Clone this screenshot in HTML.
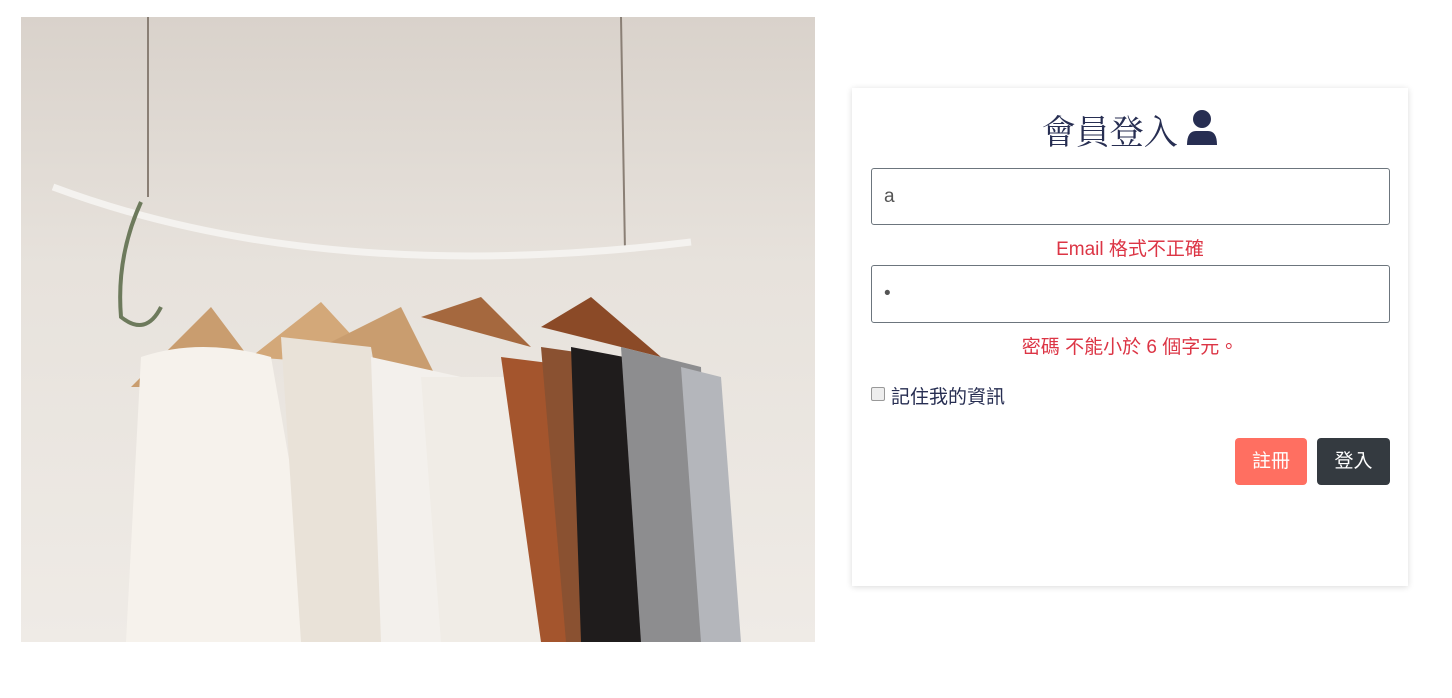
<!DOCTYPE html>
<html><head><meta charset="utf-8"><style>
body{margin:0;background:#fff;width:1452px;height:698px;overflow:hidden;font-family:"Liberation Sans","Noto Sans CJK TC",sans-serif;}
.img{position:absolute;left:21px;top:17px;width:794px;height:625px;background:linear-gradient(180deg,#d9d2cb 0%,#e7e2dc 40%,#efebe6 100%);overflow:hidden}
.card{position:absolute;left:852px;top:88px;width:556px;height:498px;background:#fff;box-shadow:0 1px 6px rgba(0,0,0,.15);}
h1{position:absolute;left:0;width:556px;top:17px;margin:0;text-align:center;font-weight:400;font-size:34px;color:#272e52;font-family:"Liberation Serif","Noto Serif CJK SC",serif;}
.in{position:absolute;left:19px;width:519px;height:57px;border:1px solid #6c757d;border-radius:3px;box-sizing:border-box;font-size:19px;color:#555;padding:17px 12px}
.err{position:absolute;left:0;width:556px;text-align:center;color:#dc3545;font-size:19px}
.btn{position:absolute;top:350px;height:47px;border-radius:4px;color:#fff;font-size:19px;line-height:47px;text-align:center}
</style></head><body>
<div class="img">
<svg width="794" height="625" viewBox="0 0 794 625">
<line x1="127" y1="0" x2="127" y2="180" stroke="#8a7f75" stroke-width="2"/>
<line x1="600" y1="0" x2="604" y2="235" stroke="#8a7f75" stroke-width="2"/>
<path d="M32 170 Q300 270 670 225" stroke="#f4f2ef" stroke-width="7" fill="none"/>
<path d="M120 185 Q95 240 100 300 Q125 320 140 290" stroke="#6d7a5c" stroke-width="4" fill="none"/>
<g fill="#c99d6f">
<path d="M110 370 L190 290 L250 370 Z"/><path d="M230 340 L300 285 L360 350 Z" fill="#d3a879"/>
<path d="M300 330 L380 290 L420 370 Z"/><path d="M400 300 L460 280 L510 330 Z" fill="#a5683e"/>
<path d="M520 310 L570 280 L640 340 Z" fill="#8b4a27"/>
</g>
<path d="M120 340 Q180 320 250 340 L300 625 L105 625 Z" fill="#f6f2ec"/>
<path d="M260 320 L350 330 L400 625 L280 625 Z" fill="#e9e2d8"/>
<path d="M350 340 L440 360 L450 625 L360 625 Z" fill="#f3f0ec"/>
<path d="M400 360 L500 360 L525 625 L420 625 Z" fill="#f0ece6"/>
<path d="M480 340 L560 350 L560 625 L520 625 Z" fill="#a4552d"/>
<path d="M520 330 L590 340 L600 625 L545 625 Z" fill="#8a5131"/>
<path d="M550 330 L630 345 L625 625 L560 625 Z" fill="#1f1c1c"/>
<path d="M600 330 L680 350 L690 625 L620 625 Z" fill="#8d8d8f"/>
<path d="M660 350 L700 360 L720 625 L680 625 Z" fill="#b4b6bb"/>
</svg>
</div>
<div class="card">
<h1>會員登入 <svg width="32" height="36" viewBox="0 0 32 36" style="vertical-align:-2px"><circle cx="16" cy="9" r="9" fill="#272e52"/><path d="M1 35 Q1 21 10 21 L22 21 Q31 21 31 35 Z" fill="#272e52"/></svg></h1>
<div class="in" style="top:80px">a</div>
<div class="err" style="top:146px">Email 格式不正確</div>
<div class="in" style="top:177px;height:58px">•</div>
<div class="err" style="top:244px">密碼 不能小於 6 個字元。</div>
<div style="position:absolute;left:19px;top:294px;font-size:19px;color:#272e52"><span style="display:inline-block;width:12px;height:12px;border:1px solid #999;border-radius:2px;background:#eee;vertical-align:2px;margin-right:6px"></span>記住我的資訊</div>
<div class="btn" style="left:383px;width:72px;background:#ff6f61">註冊</div>
<div class="btn" style="left:465px;width:73px;background:#343a40">登入</div>
</div>
</body></html>
